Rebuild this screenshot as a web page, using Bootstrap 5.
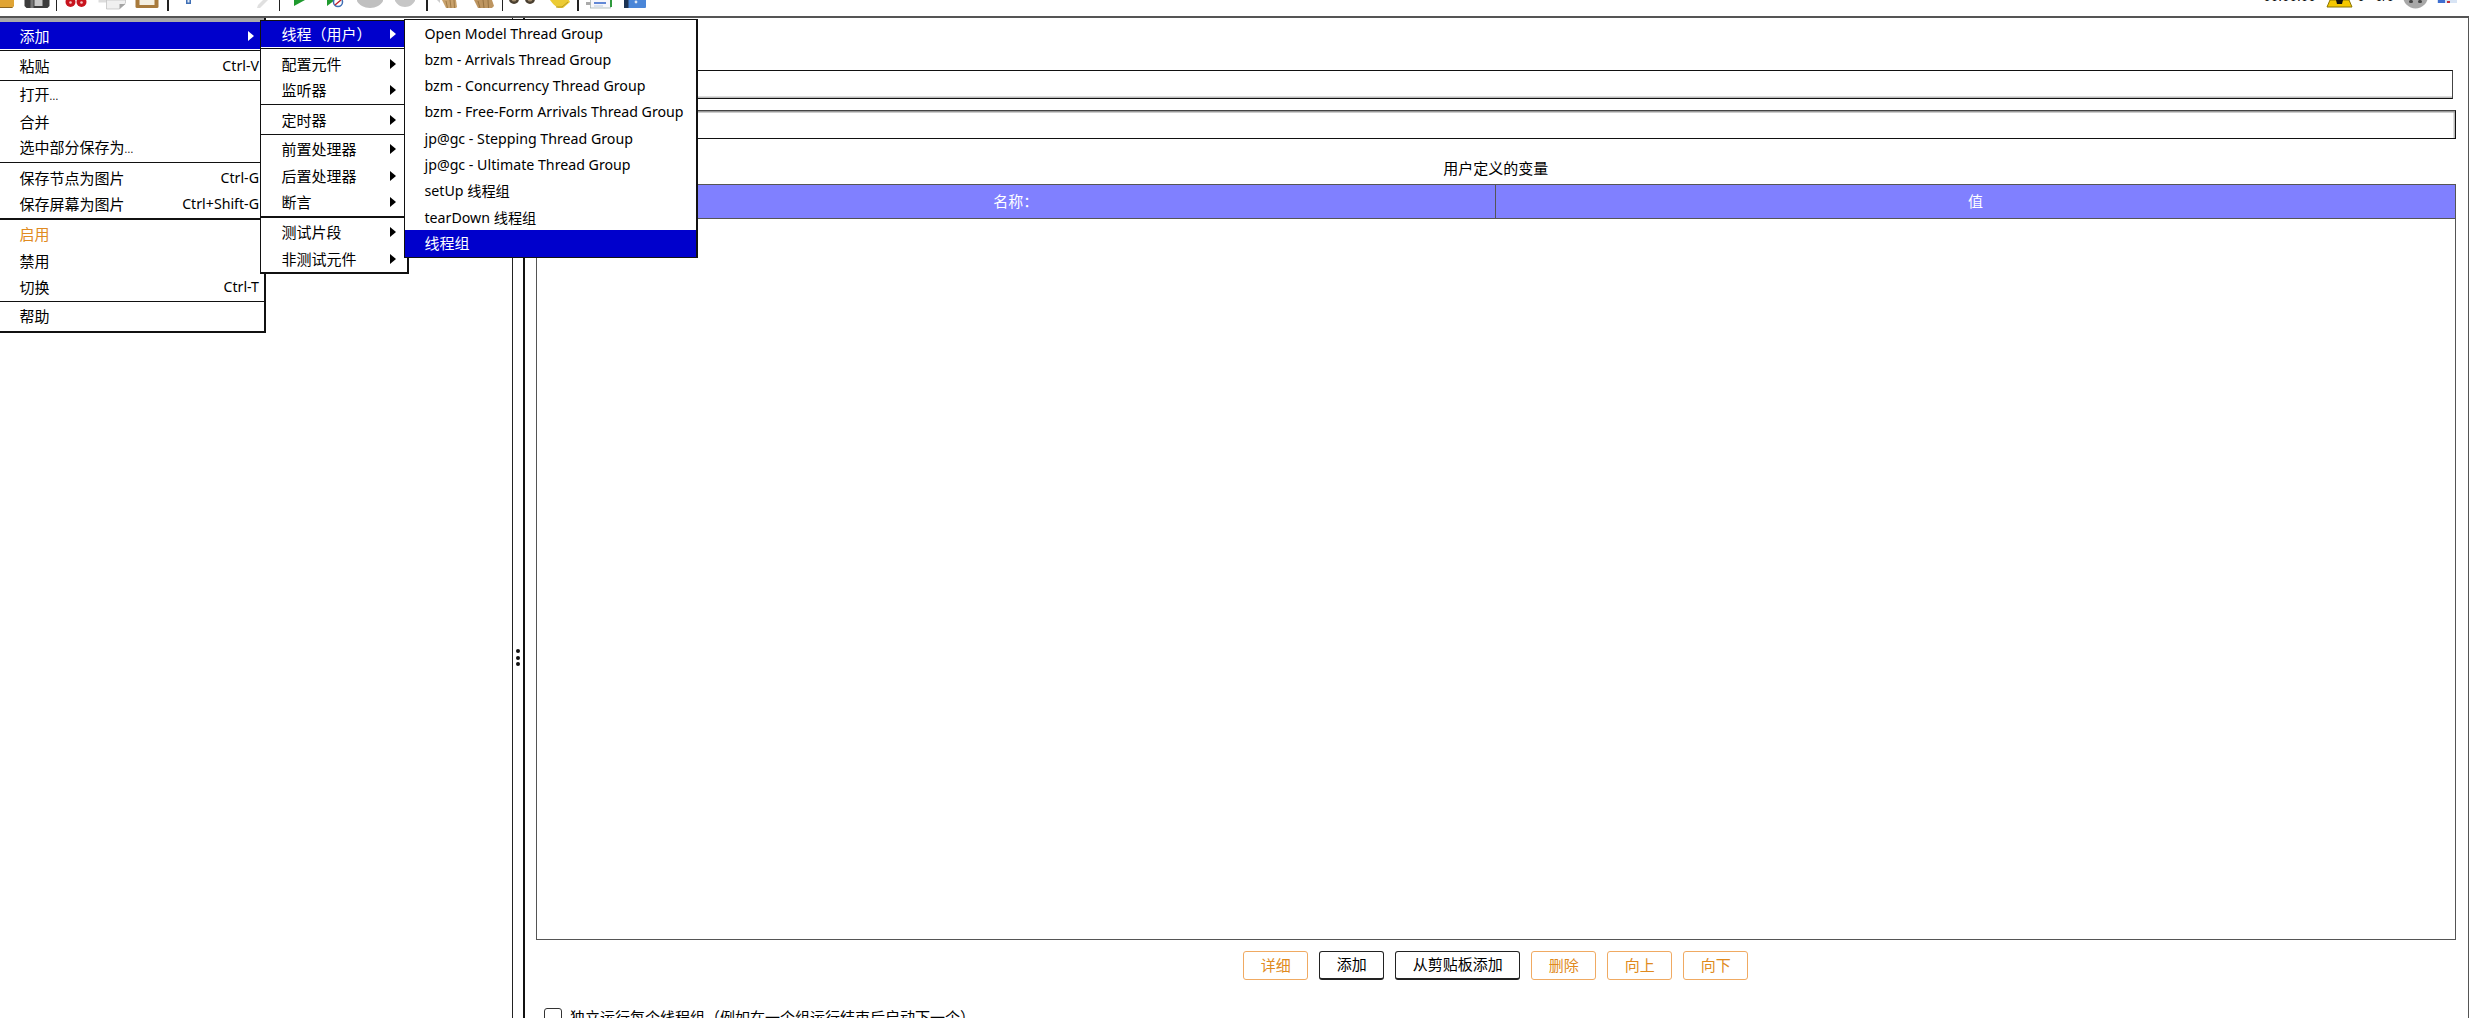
<!DOCTYPE html>
<html lang="zh-CN">

<head>
    <meta charset="UTF-8">
    <meta name="viewport" content="width=device-width, initial-scale=1.0">
    <title>线程组</title>
    <link href="https://cdn.jsdelivr.net/npm/bootstrap@5.3.0/dist/css/bootstrap.min.css" rel="stylesheet">
    <style>
        html, body {
            height: 100%;
            overflow: hidden;
        }

        body {
            font-family: "Noto Sans", "Noto Sans CJK SC", sans-serif;
            font-size: 15px;
            color: #000;
            background: #fff;
        }

        .app-shell {
            position: relative;
            height: 1018px;
        }

        /* toolbar, cut off at the top of the screen */
        .tool-strip {
            height: 18px;
            overflow: hidden;
            border-bottom: 2px solid #555;
        }

        .tool-slot {
            display: block;
            flex: none;
            width: 36px;
            height: 16px;
        }

        .tool-slot-first {
            width: 18.5px;
        }

        .tool-sep {
            flex: none;
            width: 1.5px;
            height: 11px;
            margin: 0 1px;
            background: #222;
        }

        .run-status {
            height: 16px;
            padding-right: 12px;
        }

        .run-text {
            font-family: "Liberation Sans", sans-serif;
            font-size: 13.5px;
            line-height: 16px;
            margin-top: -11px;
        }

        .run-icon {
            display: block;
            flex: none;
        }

        .run-gap {
            margin-left: 10.5px;
        }

        /* main split */
        .split-area {
            height: 1000px;
        }

        .tree-pane {
            flex: none;
            width: 512.5px;
            border-right: 1.5px solid #222;
        }

        .split-handle {
            flex: none;
            width: 10px;
            gap: 2.6px;
            padding-top: 631px;
        }

        .split-dot {
            width: 4px;
            height: 4px;
            border-radius: 50%;
            background: #111;
        }

        .detail-pane {
            flex: 1;
            min-width: 0;
            border-left: 2.5px solid #111;
            border-right: 1.5px solid #555;
            padding: 51.5px 12px 0 11px;
        }

        .field-one, .field-two {
            height: 29px;
            padding: 0 4px;
            border-radius: 0;
            background: #fff;
        }

        .field-one {
            width: calc(100% - 73px);
            margin: 0 3px 11.5px 70px;
            border: 1.5px solid #111;
            border-right-color: #444;
            box-shadow: inset 0 -1.5px 0 #bbb;
        }

        .field-two {
            width: calc(100% - 70px);
            margin-left: 70px;
            border: 1.5px solid #111;
            border-top-color: #444;
            box-shadow: inset 0 1.5px 0 #999, inset -1.5px 0 0 #bbb;
        }

        .vars-title {
            margin: 18px 0 5px;
            line-height: 22px;
            text-align: center;
        }

        .vars-table {
            table-layout: fixed;
            margin: 0;
            border-collapse: collapse;
        }

        .vars-table th {
            height: 34px;
            padding: 0;
            font-weight: 400;
            text-align: center;
            vertical-align: middle;
            color: #fff;
            background: #8080ff;
            --bs-table-bg: #8080ff;
            --bs-table-color: #fff;
            border: 1.5px solid #555;
        }

        .vars-table td {
            height: 721px;
            padding: 0;
            border: 1.5px solid #555;
            border-top: 0;
        }

        .action-row {
            gap: 11px;
            margin-top: 10.5px;
        }

        .action-btn {
            width: 65px;
            height: 29px;
            padding: 0;
            font-size: 15px;
            line-height: 1;
            border-radius: 3px;
            background: #fff;
        }

        .action-wide {
            width: 125px;
        }

        .action-off {
            color: #e08a20;
            border: 1.5px solid #f0aa62;
        }

        .action-on {
            color: #000;
            border: 1.5px solid #222;
            border-bottom-width: 2px;
        }

        .solo-check {
            margin: 26.5px 0 0 8.5px;
            gap: 8px;
        }

        .solo-check .form-check-input {
            flex: none;
            width: 18px;
            height: 18px;
            margin: 0;
            border: 1.5px solid #333;
            border-radius: 3px;
        }

        /* popup menus */
        .jm-menu {
            --bs-dropdown-min-width: 0;
            --bs-dropdown-padding-x: 0;
            --bs-dropdown-padding-y: 0;
            --bs-dropdown-border-radius: 0;
            --bs-dropdown-inner-border-radius: 0;
            --bs-dropdown-font-size: 15px;
            --bs-dropdown-color: #000;
            --bs-dropdown-link-color: #000;
            --bs-dropdown-link-active-bg: #0000cc;
            --bs-dropdown-link-active-color: #fff;
            --bs-dropdown-item-padding-x: 0;
            --bs-dropdown-item-padding-y: 0;
            position: absolute;
            display: block;
            border-style: solid;
            border-color: #111;
            border-width: 1.5px 2px 2px 1.5px;
        }

        .jm-menu .dropdown-item {
            display: flex;
            align-items: center;
            justify-content: space-between;
            height: 26.3px;
            line-height: 26.3px;
        }

        .jm-menu .dropdown-divider {
            margin: 1.2px 0;
            border-top: 1px solid #111;
            opacity: 1;
        }

        .jm-menu .divider-heavy {
            margin: 1px 0;
            border-top-width: 2px;
        }

        .menu-main {
            top: 18px;
            left: -2px;
            z-index: 10;
            width: 268px;
            height: 314.5px;
            padding-top: 4px;
            border-top: 0;
            border-left: 0;
            box-shadow: inset 0 4px 0 #aaa;
        }

        .menu-main .dropdown-item {
            padding: 0 5px 0 21.5px;
        }

        .menu-main .dropdown-item.active {
            height: 27.3px;
            padding-right: 10px;
        }

        .menu-add {
            top: 20px;
            left: 260px;
            z-index: 11;
            width: 149px;
            height: 253.5px;
        }

        .menu-add .dropdown-item {
            padding: 0 11px 0 20.5px;
        }

        .menu-threads {
            top: 19px;
            left: 404px;
            z-index: 12;
            width: 293.5px;
            height: 239px;
        }

        .menu-threads .dropdown-item {
            padding: 1px 8px 0 19.5px;
        }

        .menu-threads .dropdown-item.active {
            padding-top: 0;
        }

        .item-orange {
            color: #e08a20;
        }

        .latin-text {
            font-size: 14.2px;
        }

        .menu-dots {
            font-size: 10px;
            letter-spacing: .3px;
        }

        .item-arrow {
            flex: none;
            width: 0;
            height: 0;
            border-style: solid;
            border-width: 5px 0 5px 6px;
            border-color: transparent transparent transparent #000;
        }

        .dropdown-item.active .item-arrow {
            border-left-color: #fff;
        }
    </style>
</head>

<body>
    <div class="app-shell">
        <!-- Toolbar -->
        <div class="tool-strip d-flex">
            <svg class="tool-slot tool-slot-first" viewBox="0 0 18.5 16"><path d="M0 0h14v6l-2 2H0z" fill="#e0a434"/><path d="M0 7h13l1-1.500v.5l-2 2H0z" fill="#8a6420"/></svg>
            <svg class="tool-slot" viewBox="18.500 0 36 16"><path d="M24 0h25v6l-2 2H26l-2-2z" fill="#3c3c3c"/><rect x="30" y="0" width="3" height="8" fill="#777"/><rect x="34" y="0" width="8" height="6" fill="#c8c8c8"/></svg>
            <div class="tool-sep"></div>
            <svg class="tool-slot" viewBox="58.500 0 36 16"><circle cx="71" cy="2" r="5" fill="#c8141e"/><circle cx="82" cy="2" r="5" fill="#c8141e"/><circle cx="71" cy="2.500" r="1.300" fill="#f4c4c4"/><circle cx="82" cy="2.500" r="1.300" fill="#f4c4c4"/></svg>
            <svg class="tool-slot" viewBox="94.500 0 36 16"><path d="M99 0h8v2.500H99z" fill="#ddd"/><path d="M107 0h19v3l-6 6h-13z" fill="#f0f0f0" stroke="#bbb" stroke-width=".7"/><path d="M120 9V4h6z" fill="#a4a4a4"/></svg>
            <svg class="tool-slot" viewBox="130.500 0 36 16"><rect x="136" y="-3" width="23" height="11" rx="1.500" fill="#a87a3c"/><rect x="140" y="-3" width="15" height="8" fill="#f4efe2"/></svg>
            <div class="tool-sep"></div>
            <svg class="tool-slot" viewBox="170 0 36 16"><rect x="186" y="0" width="5" height="4" fill="#3f6fb5"/><rect x="187.500" y="0" width="2" height="2.500" fill="#dce6f4"/></svg>
            <svg class="tool-slot" viewBox="206 0 36 16"></svg>
            <svg class="tool-slot" viewBox="242 0 36 16"><path d="M268 0l-8 8-3 0 1-3 5-5z" fill="#e0e0e0"/></svg>
            <div class="tool-sep"></div>
            <svg class="tool-slot" viewBox="281 0 36 16"><path d="M294 0h11l-11 6z" fill="#1f9a2e"/></svg>
            <svg class="tool-slot" viewBox="317 0 36 16"><path d="M327 0h8l-8 6z" fill="#1f9a2e"/><circle cx="338" cy="2" r="4.500" fill="#fff" stroke="#3f6fb5" stroke-width="1.500"/><path d="M335 5l6-5" stroke="#c4202a" stroke-width="1.400"/></svg>
            <svg class="tool-slot" viewBox="353 0 36 16"><path d="M357 0h26v1c-2 4-7 7-13 7s-11-3-13-7z" fill="#c0c0c0"/></svg>
            <svg class="tool-slot" viewBox="389 0 36 16"><path d="M395 0h20v1c-2 3-5 6-10 6s-8-3-10-6z" fill="#c6c6c6"/></svg>
            <div class="tool-sep"></div>
            <svg class="tool-slot" viewBox="427 0 36 16"><path d="M435 0h3v3z" fill="#ccc"/><path d="M440 0h14l1 7-1 1h-10z" fill="#c9a26c"/><path d="M444 1l1.500 7M448 0l1 8M452 0l.5 8" stroke="#94703c" stroke-width=".8"/></svg>
            <svg class="tool-slot" viewBox="463 0 36 16"><path d="M472 0h18l2 6-2 2h-14z" fill="#bd9560"/><path d="M476 1l2 7M481 0l1 8M486 0l.5 8" stroke="#8d6a38" stroke-width=".8"/></svg>
            <div class="tool-sep"></div>
            <svg class="tool-slot" viewBox="504 0 36 16"><circle cx="514" cy="-1" r="5" fill="#4a3f30"/><circle cx="530" cy="-1" r="5" fill="#4a3f30"/><circle cx="514" cy="-1" r="2.500" fill="#a08a6c"/><circle cx="530" cy="-1" r="2.500" fill="#a08a6c"/></svg>
            <svg class="tool-slot" viewBox="540 0 36 16"><path d="M550 0h19l1 2-7 6h-5c-3-2-6-5-8-8z" fill="#eccb34"/><path d="M556 7h6l6-5" fill="none" stroke="#b89a22"/></svg>
            <div class="tool-sep"></div>
            <svg class="tool-slot" viewBox="579 0 36 16"><rect x="589.500" y="-2" width="20" height="10" fill="#f6f6fa" stroke="#9aa" stroke-width=".7"/><path d="M593 3h12" stroke="#2f62c8" stroke-width="1.500"/><path d="M593 6h9" stroke="#bcd" stroke-width="1"/><rect x="609" y="0" width="2" height="7" fill="#2f9a3c"/><rect x="585" y="2" width="4.500" height="3" fill="#aaa"/></svg>
            <svg class="tool-slot" viewBox="615 0 36 16"><rect x="623" y="-2" width="22" height="10" rx="1" fill="#4a86d8"/><rect x="623" y="-2" width="4.500" height="10" fill="#1c3354"/><circle cx="635" cy="2" r="1.400" fill="#dce6f4"/></svg>

            <div class="run-status d-flex ms-auto">
                <span class="run-text">00:00:00</span>
                <svg class="run-icon run-gap" width="27" height="16" viewBox="0 0 27 16"><path d="M4 0h19l3 7H1z" fill="#f5c800" stroke="#8a7400" stroke-width="1"/><path d="M10 0h7l-1 4h-5z" fill="#111"/></svg>
                <span class="run-text ms-1">0</span>
                <span class="run-text run-gap">0/0</span>
                <svg class="run-icon ms-2" width="27" height="16" viewBox="0 0 27 16"><circle cx="13.500" cy="-4" r="12.500" fill="#a8a8a8"/><rect x="7" y="0" width="4" height="3" rx="1.500" fill="#444"/><rect x="16" y="0" width="4" height="3" rx="1.500" fill="#444"/></svg>
                <svg class="run-icon ms-2" width="20" height="16" viewBox="0 0 20 16"><rect x="0" y="0" width="20" height="3" fill="#d8e4f4"/><rect x="1" y="0" width="7" height="3" fill="#3f6fd0"/><rect x="10" y="1" width="3" height="2" fill="#c4303a"/></svg>
            </div>
        </div>

        <!-- Split view -->
        <div class="split-area d-flex">
            <div class="tree-pane"></div>
            <div class="split-handle d-flex flex-column align-items-center">
                <span class="split-dot"></span>
                <span class="split-dot"></span>
                <span class="split-dot"></span>
            </div>
            <div class="detail-pane">
                <input type="text" class="form-control field-one">
                <input type="text" class="form-control field-two">
                <div class="vars-title">用户定义的变量</div>
                <table class="table vars-table">
                    <thead>
                        <tr>
                            <th>名称：</th>
                            <th>值</th>
                        </tr>
                    </thead>
                    <tbody>
                        <tr>
                            <td colspan="2"></td>
                        </tr>
                    </tbody>
                </table>
                <div class="action-row d-flex justify-content-center">
                    <button type="button" class="btn action-btn action-off">详细</button>
                    <button type="button" class="btn action-btn action-on">添加</button>
                    <button type="button" class="btn action-btn action-wide action-on">从剪贴板添加</button>
                    <button type="button" class="btn action-btn action-off">删除</button>
                    <button type="button" class="btn action-btn action-off">向上</button>
                    <button type="button" class="btn action-btn action-off">向下</button>
                </div>
                <div class="solo-check d-flex align-items-center">
                    <input class="form-check-input" type="checkbox" id="soloRun">
                    <label for="soloRun">独立运行每个线程组（例如在一个组运行结束后启动下一个）</label>
                </div>
            </div>
        </div>

        <!-- Context menu -->
        <div class="dropdown-menu show jm-menu menu-main">
            <a class="dropdown-item active" href="#">添加<span class="item-arrow"></span></a>
            <hr class="dropdown-divider">
            <a class="dropdown-item" href="#">粘贴<span class="latin-text">Ctrl-V</span></a>
            <hr class="dropdown-divider">
            <a class="dropdown-item" href="#"><span>打开<span class="menu-dots">...</span></span></a>
            <a class="dropdown-item" href="#">合并</a>
            <a class="dropdown-item" href="#"><span>选中部分保存为<span class="menu-dots">...</span></span></a>
            <hr class="dropdown-divider">
            <a class="dropdown-item" href="#">保存节点为图片<span class="latin-text">Ctrl-G</span></a>
            <a class="dropdown-item" href="#">保存屏幕为图片<span class="latin-text">Ctrl+Shift-G</span></a>
            <hr class="dropdown-divider divider-heavy">
            <a class="dropdown-item item-orange" href="#">启用</a>
            <a class="dropdown-item" href="#">禁用</a>
            <a class="dropdown-item" href="#">切换<span class="latin-text">Ctrl-T</span></a>
            <hr class="dropdown-divider">
            <a class="dropdown-item" href="#">帮助</a>
        </div>

        <div class="dropdown-menu show jm-menu menu-add">
            <a class="dropdown-item active" href="#">线程（用户）<span class="item-arrow"></span></a>
            <hr class="dropdown-divider">
            <a class="dropdown-item" href="#">配置元件<span class="item-arrow"></span></a>
            <a class="dropdown-item" href="#">监听器<span class="item-arrow"></span></a>
            <hr class="dropdown-divider">
            <a class="dropdown-item" href="#">定时器<span class="item-arrow"></span></a>
            <hr class="dropdown-divider">
            <a class="dropdown-item" href="#">前置处理器<span class="item-arrow"></span></a>
            <a class="dropdown-item" href="#">后置处理器<span class="item-arrow"></span></a>
            <a class="dropdown-item" href="#">断言<span class="item-arrow"></span></a>
            <hr class="dropdown-divider divider-heavy">
            <a class="dropdown-item" href="#">测试片段<span class="item-arrow"></span></a>
            <a class="dropdown-item" href="#">非测试元件<span class="item-arrow"></span></a>
        </div>

        <div class="dropdown-menu show jm-menu menu-threads">
            <a class="dropdown-item latin-text" href="#">Open Model Thread Group</a>
            <a class="dropdown-item latin-text" href="#">bzm - Arrivals Thread Group</a>
            <a class="dropdown-item latin-text" href="#">bzm - Concurrency Thread Group</a>
            <a class="dropdown-item latin-text" href="#">bzm - Free-Form Arrivals Thread Group</a>
            <a class="dropdown-item latin-text" href="#">jp@gc - Stepping Thread Group</a>
            <a class="dropdown-item latin-text" href="#">jp@gc - Ultimate Thread Group</a>
            <a class="dropdown-item latin-text" href="#">setUp 线程组</a>
            <a class="dropdown-item latin-text" href="#">tearDown 线程组</a>
            <a class="dropdown-item active" href="#">线程组</a>
        </div>
    </div>

    <script src="https://cdn.jsdelivr.net/npm/bootstrap@5.3.0/dist/js/bootstrap.bundle.min.js"></script>
</body>

</html>
